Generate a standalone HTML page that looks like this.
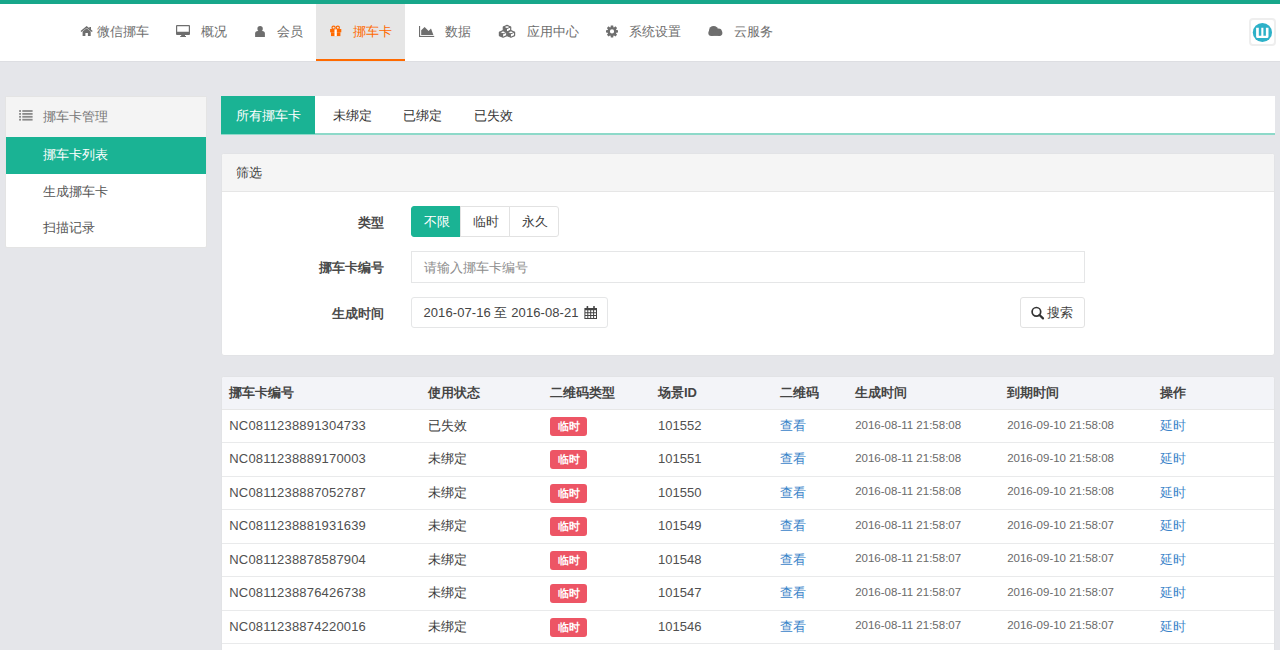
<!DOCTYPE html>
<html><head><meta charset="utf-8"><style>
*{box-sizing:border-box;margin:0;padding:0}
html,body{width:1280px;height:650px;overflow:hidden}
body{position:relative;background:#e5e6ea;font-family:"Liberation Sans",sans-serif;font-size:13px;color:#676a6c}
.abs{position:absolute}
#topbar{left:0;top:0;width:1280px;height:4px;background:#18a78a}
#header{left:0;top:4px;width:1280px;height:58px;background:#fff;border-bottom:1px solid #dddee2}
#navact{left:316px;top:4px;width:89px;height:57px;background:#e6e6e6;border-bottom:2px solid #ff6a00}
.navt{position:absolute;top:22px;line-height:20px;color:#6e6e6e;white-space:nowrap}
.navt.on{color:#ff6a00}
#logo{left:1249px;top:18px;width:27px;height:28px;border:2px solid #eeeeee;border-radius:4px;background:#fff}
#side{left:5px;top:96px;width:202px;height:152px;background:#fff;border:1px solid #e4e4e4;border-radius:2px;overflow:hidden}
#side .hd{position:absolute;left:0;top:0;width:100%;height:40px;background:#f4f4f4;color:#777}
#side .hd .tx{position:absolute;line-height:40px}
#side .it{position:absolute;left:0;width:100%;height:36.67px;line-height:36.67px;padding-left:37px;color:#555}
#side .it.on{background:#1ab394;color:#fff}
#tabs{left:221px;top:96px;width:1054px;height:39px;background:#fff;border-bottom:2px solid #8dd9c9}
#tabs .tbon{position:absolute;left:0;top:0;width:94px;height:38px;background:#1ab394}
#tabs .tb{position:absolute;top:0.5px;line-height:38px;color:#333}
#tabs .tb.on{color:#fff}
.panel{position:absolute;background:#fff;border:1px solid #e2e3e6;border-radius:3px;overflow:hidden}
#filter{left:221px;top:153px;width:1054px;height:203px}
#filter .hd{position:absolute;left:0;top:0;width:100%;height:38px;background:#f5f5f5;border-bottom:1px solid #e6e6e6;line-height:37px;padding-left:14px;color:#404040}
.lbl{position:absolute;font-weight:bold;color:#4a4a4a;text-align:right;width:100px;line-height:20px}
.btn{position:absolute;border:1px solid #e2e2e2;background:#fff;text-align:center;color:#3c3c3c;line-height:29px}
.b1{border-radius:3px 0 0 3px}.b3{border-radius:0 3px 3px 0}.sbtn{border-radius:3px}
.btn.on{background:#1ab394;border-color:#1ab394;color:#fff}
.inp{position:absolute;border:1px solid #e5e6e7;background:#fff;color:#8c8c8c;padding-left:11.5px;padding-top:1px;white-space:nowrap}
.dinp{color:#444;letter-spacing:0.08px;border-radius:3px;padding-top:0}
#table{left:221px;top:376px;width:1054px;height:290px}
#table .th{position:absolute;left:0;top:0;width:100%;height:33px;background:#f3f4f8;border-bottom:1px solid #e7e7e7}
.row{position:absolute;left:0;width:100%;height:33.43px;border-bottom:1px solid #e9eaeb}
.c{position:absolute;top:0;white-space:nowrap}
.th .c{font-weight:bold;color:#454545;line-height:32px}
.row .c{line-height:32px;color:#3c3c3c}
.nc{letter-spacing:0.18px;color:#505050}.num{color:#505050}
.badge{position:relative;top:0px;display:inline-block;background:#ed5565;color:#fff;font-weight:bold;font-size:11px;border-radius:3px;width:37px;height:19px;line-height:19px;text-align:center;vertical-align:middle}
.lnk{color:#3a84c9}
.dt{font-size:11.5px;color:#6a6a6a;position:relative;top:-1.5px}

</style></head><body>
<div id="topbar" class="abs"></div>
<div id="header" class="abs"></div>
<div id="navact" class="abs"></div>
<div class="navt" style="left:97.0px">微信挪车</div>
<div class="navt" style="left:200.6px">概况</div>
<div class="navt" style="left:277.0px">会员</div>
<div class="navt on" style="left:352.5px">挪车卡</div>
<div class="navt" style="left:445.0px">数据</div>
<div class="navt" style="left:527.0px">应用中心</div>
<div class="navt" style="left:629.0px">系统设置</div>
<div class="navt" style="left:734.0px">云服务</div>
<div id="logo" class="abs"></div>
<div id="side" class="abs"><div class="hd"><span class="tx" style="left:37px;top:0">挪车卡管理</span></div><div class="it on" style="top:40px">挪车卡列表</div><div class="it" style="top:76.67px">生成挪车卡</div><div class="it" style="top:113.33px">扫描记录</div></div>
<div id="tabs" class="abs"><div class="tbon"></div><span class="tb on" style="left:15px">所有挪车卡</span><span class="tb" style="left:111.5px">未绑定</span><span class="tb" style="left:182px">已绑定</span><span class="tb" style="left:253px">已失效</span></div>
<div id="filter" class="panel"><div class="hd">筛选</div></div>
<div class="lbl" style="left:283.8px;top:212.5px">类型</div>
<div class="lbl" style="left:283.8px;top:258px">挪车卡编号</div>
<div class="lbl" style="left:283.8px;top:303.5px">生成时间</div>
<div class="btn on b1" style="left:411px;top:206px;width:50px;height:31px;padding-left:1px">不限</div>
<div class="btn" style="left:460px;top:206px;width:50px;height:31px;padding-left:1px">临时</div>
<div class="btn b3" style="left:509px;top:206px;width:50px;height:31px;padding-left:2px">永久</div>
<div class="inp" style="left:411px;top:251px;width:674px;height:32px;line-height:30px">请输入挪车卡编号</div>
<div class="inp dinp" style="left:411px;top:297px;width:197px;height:31px;line-height:29px">2016-07-16 至 2016-08-21</div>
<div class="btn sbtn" style="left:1019.5px;top:297px;width:65.5px;height:31px;line-height:29px;text-align:left;padding-left:26px">搜索</div>
<div id="table" class="panel"><div class="th"><span class="c" style="left:7.3px">挪车卡编号</span><span class="c" style="left:205.7px">使用状态</span><span class="c" style="left:328.1px">二维码类型</span><span class="c" style="left:436.0px">场景ID</span><span class="c" style="left:557.5px">二维码</span><span class="c" style="left:633.2px">生成时间</span><span class="c" style="left:785.2px">到期时间</span><span class="c" style="left:937.8px">操作</span></div><div class="row" style="top:33.00px"><span class="c" style="left:7.3px"><span class="nc">NC0811238891304733</span></span><span class="c" style="left:205.7px">已失效</span><span class="c" style="left:328.1px"><span class="badge">临时</span></span><span class="c" style="left:436.0px"><span class="num">101552</span></span><span class="c" style="left:557.5px"><span class="lnk">查看</span></span><span class="c" style="left:633.2px"><span class="dt">2016-08-11 21:58:08</span></span><span class="c" style="left:785.2px"><span class="dt">2016-09-10 21:58:08</span></span><span class="c" style="left:937.8px"><span class="lnk">延时</span></span></div><div class="row" style="top:66.43px"><span class="c" style="left:7.3px"><span class="nc">NC0811238889170003</span></span><span class="c" style="left:205.7px">未绑定</span><span class="c" style="left:328.1px"><span class="badge">临时</span></span><span class="c" style="left:436.0px"><span class="num">101551</span></span><span class="c" style="left:557.5px"><span class="lnk">查看</span></span><span class="c" style="left:633.2px"><span class="dt">2016-08-11 21:58:08</span></span><span class="c" style="left:785.2px"><span class="dt">2016-09-10 21:58:08</span></span><span class="c" style="left:937.8px"><span class="lnk">延时</span></span></div><div class="row" style="top:99.86px"><span class="c" style="left:7.3px"><span class="nc">NC0811238887052787</span></span><span class="c" style="left:205.7px">未绑定</span><span class="c" style="left:328.1px"><span class="badge">临时</span></span><span class="c" style="left:436.0px"><span class="num">101550</span></span><span class="c" style="left:557.5px"><span class="lnk">查看</span></span><span class="c" style="left:633.2px"><span class="dt">2016-08-11 21:58:08</span></span><span class="c" style="left:785.2px"><span class="dt">2016-09-10 21:58:08</span></span><span class="c" style="left:937.8px"><span class="lnk">延时</span></span></div><div class="row" style="top:133.29px"><span class="c" style="left:7.3px"><span class="nc">NC0811238881931639</span></span><span class="c" style="left:205.7px">未绑定</span><span class="c" style="left:328.1px"><span class="badge">临时</span></span><span class="c" style="left:436.0px"><span class="num">101549</span></span><span class="c" style="left:557.5px"><span class="lnk">查看</span></span><span class="c" style="left:633.2px"><span class="dt">2016-08-11 21:58:07</span></span><span class="c" style="left:785.2px"><span class="dt">2016-09-10 21:58:07</span></span><span class="c" style="left:937.8px"><span class="lnk">延时</span></span></div><div class="row" style="top:166.72px"><span class="c" style="left:7.3px"><span class="nc">NC0811238878587904</span></span><span class="c" style="left:205.7px">未绑定</span><span class="c" style="left:328.1px"><span class="badge">临时</span></span><span class="c" style="left:436.0px"><span class="num">101548</span></span><span class="c" style="left:557.5px"><span class="lnk">查看</span></span><span class="c" style="left:633.2px"><span class="dt">2016-08-11 21:58:07</span></span><span class="c" style="left:785.2px"><span class="dt">2016-09-10 21:58:07</span></span><span class="c" style="left:937.8px"><span class="lnk">延时</span></span></div><div class="row" style="top:200.15px"><span class="c" style="left:7.3px"><span class="nc">NC0811238876426738</span></span><span class="c" style="left:205.7px">未绑定</span><span class="c" style="left:328.1px"><span class="badge">临时</span></span><span class="c" style="left:436.0px"><span class="num">101547</span></span><span class="c" style="left:557.5px"><span class="lnk">查看</span></span><span class="c" style="left:633.2px"><span class="dt">2016-08-11 21:58:07</span></span><span class="c" style="left:785.2px"><span class="dt">2016-09-10 21:58:07</span></span><span class="c" style="left:937.8px"><span class="lnk">延时</span></span></div><div class="row" style="top:233.58px"><span class="c" style="left:7.3px"><span class="nc">NC0811238874220016</span></span><span class="c" style="left:205.7px">未绑定</span><span class="c" style="left:328.1px"><span class="badge">临时</span></span><span class="c" style="left:436.0px"><span class="num">101546</span></span><span class="c" style="left:557.5px"><span class="lnk">查看</span></span><span class="c" style="left:633.2px"><span class="dt">2016-08-11 21:58:07</span></span><span class="c" style="left:785.2px"><span class="dt">2016-09-10 21:58:07</span></span><span class="c" style="left:937.8px"><span class="lnk">延时</span></span></div><div class="row" style="top:267.01px"><span class="c" style="left:7.3px"><span class="nc">NC0811238872011234</span></span><span class="c" style="left:205.7px">未绑定</span><span class="c" style="left:328.1px"><span class="badge">临时</span></span><span class="c" style="left:436.0px"><span class="num">101545</span></span><span class="c" style="left:557.5px"><span class="lnk">查看</span></span><span class="c" style="left:633.2px"><span class="dt">2016-08-11 21:58:07</span></span><span class="c" style="left:785.2px"><span class="dt">2016-09-10 21:58:07</span></span><span class="c" style="left:937.8px"><span class="lnk">延时</span></span></div></div>
<svg class="abs" style="left:0;top:0;pointer-events:none" width="1280" height="650" viewBox="0 0 1280 650">
<g fill="#6e6e6e">
<!-- home -->
<path d="M82.6,31.6 L86.65,28.3 L90.7,31.6 V35.9 H87.9 V32.9 H85.4 V35.9 H82.6 Z"/>
<path d="M81,31.5 L86.65,26.9 L92.3,31.5" fill="none" stroke="#6e6e6e" stroke-width="1.4"/>
<rect x="89.3" y="27" width="1.7" height="3.2"/>
<!-- desktop -->
<path d="M177,25 H189 Q190,25 190,26 V34 Q190,35 189,35 H177 Q176,35 176,34 V26 Q176,25 177,25 Z M177.2,26.2 V31.8 H188.8 V26.2 Z" fill-rule="evenodd"/>
<rect x="181.2" y="35" width="3.8" height="1.3"/>
<rect x="180.2" y="36" width="5.8" height="1"/>
<!-- user -->
<circle cx="260.1" cy="28.7" r="2.7"/>
<path d="M255.1,36.9 V33.6 Q255.1,31.1 257.8,31.1 H262.2 Q264.9,31.1 264.9,33.6 V36.9 Z"/>
<!-- area chart -->
<rect x="419" y="26" width="1.1" height="11"/>
<rect x="419" y="35.9" width="15.2" height="1.1"/>
<path d="M421.2,35 V30.2 L424.6,26.9 L428.6,31 L431,28.6 L433.4,35 Z"/>
<!-- cubes -->
<path d="M507.00,25.40 L510.70,27.00 L510.70,30.40 L507.00,32.00 L503.30,30.40 L503.30,27.00 Z" fill="#fff" stroke="#6e6e6e" stroke-width="1.2" stroke-linejoin="round"/><path d="M503.30,27.00 L507.00,28.60 L507.00,32.00 L503.30,30.40 Z" fill="#6e6e6e"/><path d="M503.30,27.00 L507.00,28.60 L510.70,27.00" fill="none" stroke="#6e6e6e" stroke-width="1"/><path d="M503.10,30.60 L506.80,32.20 L506.80,35.60 L503.10,37.20 L499.40,35.60 L499.40,32.20 Z" fill="#fff" stroke="#6e6e6e" stroke-width="1.2" stroke-linejoin="round"/><path d="M499.40,32.20 L503.10,33.80 L503.10,37.20 L499.40,35.60 Z" fill="#6e6e6e"/><path d="M499.40,32.20 L503.10,33.80 L506.80,32.20" fill="none" stroke="#6e6e6e" stroke-width="1"/><path d="M510.90,30.60 L514.60,32.20 L514.60,35.60 L510.90,37.20 L507.20,35.60 L507.20,32.20 Z" fill="#fff" stroke="#6e6e6e" stroke-width="1.2" stroke-linejoin="round"/><path d="M507.20,32.20 L510.90,33.80 L510.90,37.20 L507.20,35.60 Z" fill="#6e6e6e"/><path d="M507.20,32.20 L510.90,33.80 L514.60,32.20" fill="none" stroke="#6e6e6e" stroke-width="1"/>
<!-- gear -->
<path fill-rule="evenodd" d="M610.58,27.13 L610.79,25.42 L613.21,25.42 L613.42,27.13 L614.02,27.38 L615.37,26.32 L617.08,28.03 L616.02,29.38 L616.27,29.98 L617.98,30.19 L617.98,32.61 L616.27,32.82 L616.02,33.42 L617.08,34.77 L615.37,36.48 L614.02,35.42 L613.42,35.67 L613.21,37.38 L610.79,37.38 L610.58,35.67 L609.98,35.42 L608.63,36.48 L606.92,34.77 L607.98,33.42 L607.73,32.82 L606.02,32.61 L606.02,30.19 L607.73,29.98 L607.98,29.38 L606.92,28.03 L608.63,26.32 L609.98,27.38 Z M612.00,29.30 A2.1,2.1 0 1,0 612.00,33.50 A2.1,2.1 0 1,0 612.00,29.30 Z"/>
<!-- cloud -->
<circle cx="713.6" cy="30.6" r="4.6"/>
<circle cx="718.6" cy="31.6" r="3.2"/>
<circle cx="711.3" cy="32.9" r="3"/>
<circle cx="719.6" cy="33.1" r="2.8"/>
<rect x="711.3" y="32" width="8.3" height="3.9"/>
</g>
<!-- gift -->
<g fill="#ff6a00">
<ellipse cx="333.6" cy="27.7" rx="1.6" ry="1.5" fill="none" stroke="#ff6a00" stroke-width="1.2"/>
<ellipse cx="337.8" cy="27.7" rx="1.6" ry="1.5" fill="none" stroke="#ff6a00" stroke-width="1.2"/>
<rect x="330.1" y="29" width="11.2" height="3.3"/>
<rect x="331" y="32.3" width="9.4" height="3.8"/>
</g>
<rect x="334.5" y="29.3" width="2.3" height="6.8" fill="#fff"/>
<!-- list -->
<g fill="#8a8a8a">
<rect x="19.1" y="110.1" width="1.9" height="1.8"/><rect x="22.3" y="110.1" width="10.3" height="1.8"/>
<rect x="19.1" y="113" width="1.9" height="1.8"/><rect x="22.3" y="113" width="10.3" height="1.8"/>
<rect x="19.1" y="115.9" width="1.9" height="1.8"/><rect x="22.3" y="115.9" width="10.3" height="1.8"/>
<rect x="19.1" y="118.8" width="1.9" height="1.8"/><rect x="22.3" y="118.8" width="10.3" height="1.8"/>
</g>
<!-- search -->
<circle cx="1036.4" cy="311.8" r="4.3" fill="none" stroke="#333" stroke-width="1.7"/>
<path d="M1039.5,315 L1043,318.4" stroke="#333" stroke-width="2.2" stroke-linecap="round"/>
<!-- calendar -->
<g fill="#444">
<path fill-rule="evenodd" d="M584.4,308 H597 V318.9 H584.4 Z M585.4,310.3 V312.2 H587.3 V310.3 Z M588.3,310.3 V312.2 H590.2 V310.3 Z M591.2,310.3 V312.2 H593.1 V310.3 Z M594.1,310.3 V312.2 H596 V310.3 Z M585.4,313.2 V315.1 H587.3 V313.2 Z M588.3,313.2 V315.1 H590.2 V313.2 Z M591.2,313.2 V315.1 H593.1 V313.2 Z M594.1,313.2 V315.1 H596 V313.2 Z M585.4,316.1 V318 H587.3 V316.1 Z M588.3,316.1 V318 H590.2 V316.1 Z M591.2,316.1 V318 H593.1 V316.1 Z M594.1,316.1 V318 H596 V316.1 Z"/>
<rect x="586.6" y="305.9" width="1.6" height="3" rx="0.5"/>
<rect x="593.2" y="305.9" width="1.6" height="3" rx="0.5"/>
</g>
<!-- logo -->
<circle cx="1262.4" cy="32.5" r="9.6" fill="#2db1c8"/>
<path d="M1256.1,27.7 H1258.8 V35.8 H1261.3 V27.7 H1263.4 V35.8 H1265.9 V27.7 H1268.5 V36.6 Q1268.5,38.1 1267,38.1 H1257.6 Q1256.1,38.1 1256.1,36.6 Z" fill="#fff"/>
</svg>
</body></html>
